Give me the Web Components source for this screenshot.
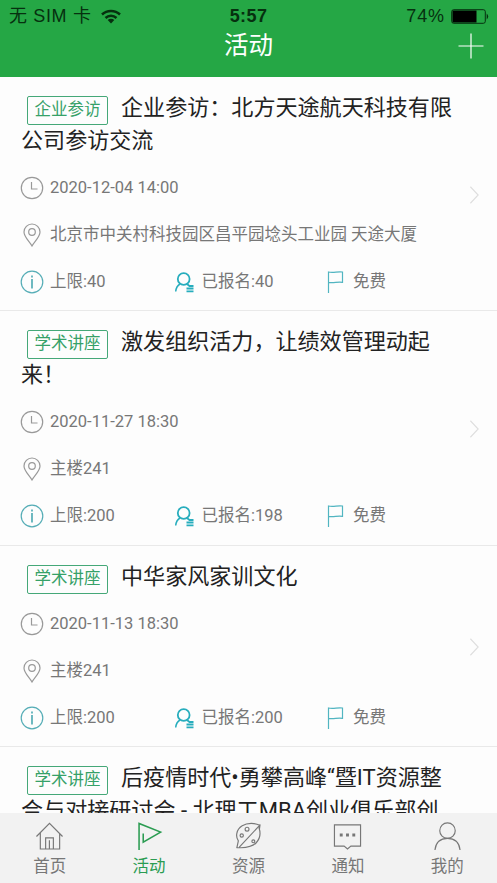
<!DOCTYPE html>
<html lang="zh-CN">
<head>
<meta charset="utf-8">
<title>活动</title>
<style>
html,body{margin:0;height:100%;overflow:hidden;background:#fff;font-family:Roboto,"Noto Sans CJK SC",sans-serif}
</style>
</head>
<body>
<activity-app></activity-app>
<script>
const define = (name, html) => {
  customElements.define(name, class extends HTMLElement {
    connectedCallback() {
      if (this.shadowRoot) return;
      const root = this.attachShadow({ mode: 'open' });
      root.innerHTML = typeof html === 'function' ? html(this) : html;
    }
  });
};

const icons = {
  clock: ['0 0 24 24', '<circle cx="12" cy="12" r="10.7"/><path d="M11.500 6v7h6"/>'],
  pin: ['0 0 24 24', '<path d="M12 23C9.500 18.500 4 14 4 9a8 8 0 0 1 16 0c0 5-5.500 9.500-8 14z"/><circle cx="12" cy="9" r="3.300"/>'],
  info: ['0 0 24 24', '<circle cx="12" cy="12" r="10.800"/><path d="M12 9v9.500M12 5.500v2" stroke-width="1.700"/>'],
  person: ['0 0 24 24', '<circle cx="11.700" cy="9" r="5.900" stroke-width="1.800"/><path d="M8 14c-2.500 1.500-4 4-4.300 7.500" stroke-width="1.500"/><path d="M15 14l2.500 2h4M14.500 18.500h7M14.500 21.300h7" stroke-width="1.800"/>'],
  flag: ['0 0 24 24', '<path d="M5.500 23V2c5 1.500 9-1 14 0v10.300c-5-1-9 1.200-14 0"/>'],
  chevron: ['0 0 12 20', '<path d="M1.500 1l8.500 9-8.500 9"/>'],
  plus: ['0 0 26 26', '<path d="M13 .5v25M.5 13h25"/>'],
  home: ['0 0 30 30', '<path d="M1.500 16L15 2.500 28.500 16M5.500 12.500V29h20V12.500M11 29V17.500h8V29M14.900 29v-9"/>'],
  active: ['0 0 30 30', '<path d="M4.200 30V2.500L26.500 11.500 8.500 22V13" stroke-width="1.600"/>'],
  palette: ['0 0 30 30', '<path d="M26.500 4.500C22 2 14 1.500 8.500 5 2 9 1.500 16.500 4.500 20.500L3 27.500c7 .5 15 .5 20-5 4-4.500 4.500-10.500 3-15zM27 4L5.500 27M27 3.500l-.7 5"/><circle cx="8" cy="15" r="1.700"/><circle cx="13.500" cy="8.500" r="2"/><circle cx="20" cy="21" r="1.500"/>'],
  message: ['0 0 30 30', '<path d="M1.500 4h27v22H18.500L15 29l-3.500-3H1.500z"/><path d="M7 14.500h3M13.500 14.500h3M20 14.500h3" stroke-width="3"/>'],
  me: ['0 0 30 30', '<circle cx="15" cy="10" r="8"/><path d="M2 30c1-8 6-12 13-12s12 4 13 12"/>']
};

define('line-icon', el => {
  const [box, body] = icons[el.getAttribute('name')];
  return `<style>:host{display:block;flex:none;width:24px;height:24px}svg{display:block;width:100%;height:100%;fill:none;stroke:currentColor;stroke-width:var(--stroke,1.2)}</style>
  <svg viewBox="${box}">${body}</svg>`;
});

define('status-bar', `<style>
:host{display:grid;grid-template-columns:1fr auto 1fr;align-items:center;height:32px;color:#06300f;font:18px/32px "Liberation Sans","Noto Sans CJK SC",sans-serif}
div{display:flex;align-items:center}
.left{padding-left:9px;gap:9px;white-space:pre;letter-spacing:.65px}
.right{justify-content:flex-end;padding-right:8px;gap:6px;letter-spacing:.9px}
b{font-size:18px;letter-spacing:.4px}
svg{display:block}
</style>
<div class="left"><span>无 SIM 卡</span><svg width="20" height="15" viewBox="0 0 20 15"><g fill="none" stroke="currentColor" stroke-width="2.500"><path d="M1 5.500a13 13 0 0 1 18 0M4.500 9a8 8 0 0 1 11 0"/></g><path d="M10 14.500l-3.300-3.400a4.700 4.700 0 0 1 6.600 0z" fill="currentColor"/></svg></div>
<b>5:57</b>
<div class="right"><span>74%</span><svg width="38" height="15" viewBox="0 0 38 15"><rect x=".7" y=".7" width="33.600" height="13.600" rx="2" fill="none" stroke="currentColor"/><rect x="1.500" y="1.500" width="24" height="12" fill="#000"/><path d="M35.700 4.500q3 3 0 6z" fill="currentColor"/></svg></div>`);

define('nav-header', `<style>
:host{display:block;height:77px;flex:none;background:#25a745;color:#fff}
.title{display:grid;grid-template-columns:1fr auto 1fr;align-items:center;height:28px}
h1{grid-column:2;margin:0;font-size:24.500px;line-height:28px;font-weight:400}
line-icon{justify-self:end;margin:0 13px 0 0;width:26px;height:26px;--stroke:1.200}
</style>
<status-bar></status-bar>
<div class="title"><h1><slot></slot></h1><line-icon name="plus"></line-icon></div>`);

define('icon-label', el => `<style>
:host{display:flex;align-items:center;gap:6px;height:24px;font-size:16.500px;line-height:24px;color:#777;white-space:nowrap}
line-icon{color:${el.getAttribute('tint') || '#999'}}
</style><line-icon name="${el.getAttribute('icon')}"></line-icon><span><slot></slot></span>`);

define('activity-item', el => `<style>
:host{display:flex;align-items:center;box-sizing:border-box;border-bottom:1px solid #e9e9e9;padding:14px 16px 16.500px 20px;background:#fdfdfd;flex:none}
main{flex:1;min-width:0}
h2{margin:0 0 0 1px;font-size:22.070px;line-height:33px;font-weight:400;color:#222;width:442px}
.tag{display:inline-block;box-sizing:border-box;height:29px;width:81px;margin:0 13px 0 6px;border:1.500px solid #45a878;border-radius:2px;font-size:16.500px;line-height:26px;text-align:center;color:#36a168;vertical-align:middle;position:relative;top:1px}
.rows{display:grid;gap:23.200px;margin-top:18.600px}
.facts{display:grid;grid-template-columns:151.500px 151.500px 1fr}
.arrow{width:11px;height:20px;color:#dedede;margin:5px 1px 0 -12px}
</style>
<main><h2><span class="tag">${el.getAttribute('tag')}</span><slot></slot></h2>
${el.hasAttribute('time') ? `<div class="rows">
<icon-label icon="clock">${el.getAttribute('time')}</icon-label>
<icon-label icon="pin">${el.getAttribute('place')}</icon-label>
<div class="facts"><icon-label icon="info" tint="#55adb6">上限:${el.getAttribute('limit')}</icon-label><icon-label icon="person" tint="#27adbd">已报名:${el.getAttribute('joined')}</icon-label><icon-label icon="flag" tint="#51b5c1">免费</icon-label></div>
</div></main><line-icon class="arrow" name="chevron"></line-icon>` : '</main>'}`);

define('tab-item', `<style>
:host{display:flex;flex-direction:column;align-items:center;color:#777;font-size:16.500px;line-height:24px;padding-top:8px}
:host([selected]){color:#2b9c52}
::slotted(line-icon){width:29px;height:29px;margin-bottom:5px}
</style><slot name="icon"></slot><span><slot></slot></span>`);

define('tab-bar', `<style>
:host{display:grid;grid-template-columns:repeat(5,1fr);height:70px;flex:none;background:#f2f2f2}
</style>
<tab-item><line-icon slot="icon" name="home"></line-icon>首页</tab-item>
<tab-item selected><line-icon slot="icon" name="active"></line-icon>活动</tab-item>
<tab-item><line-icon slot="icon" name="palette"></line-icon>资源</tab-item>
<tab-item><line-icon slot="icon" name="message"></line-icon>通知</tab-item>
<tab-item><line-icon slot="icon" name="me"></line-icon>我的</tab-item>`);

define('activity-app', `<style>
:host{display:flex;flex-direction:column;height:883px;width:497px}
.list{flex:1;min-height:0;overflow:hidden;display:flex;flex-direction:column}
</style>
<nav-header>活动</nav-header>
<div class="list">
<activity-item tag="企业参访" time="2020-12-04 14:00" place="北京市中关村科技园区昌平园埝头工业园 天途大厦" limit="40" joined="40">企业参访：北方天途航天科技有限公司参访交流</activity-item>
<activity-item tag="学术讲座" time="2020-11-27 18:30" place="主楼241" limit="200" joined="198">激发组织活力，让绩效管理动起来！</activity-item>
<activity-item tag="学术讲座" time="2020-11-13 18:30" place="主楼241" limit="200" joined="200">中华家风家训文化</activity-item>
<activity-item tag="学术讲座">后疫情时代•勇攀高峰“暨IT资源整合与对接研讨会 - 北理工MBA创业俱乐部创</activity-item>
</div>
<tab-bar></tab-bar>`);
</script>
</body>
</html>
